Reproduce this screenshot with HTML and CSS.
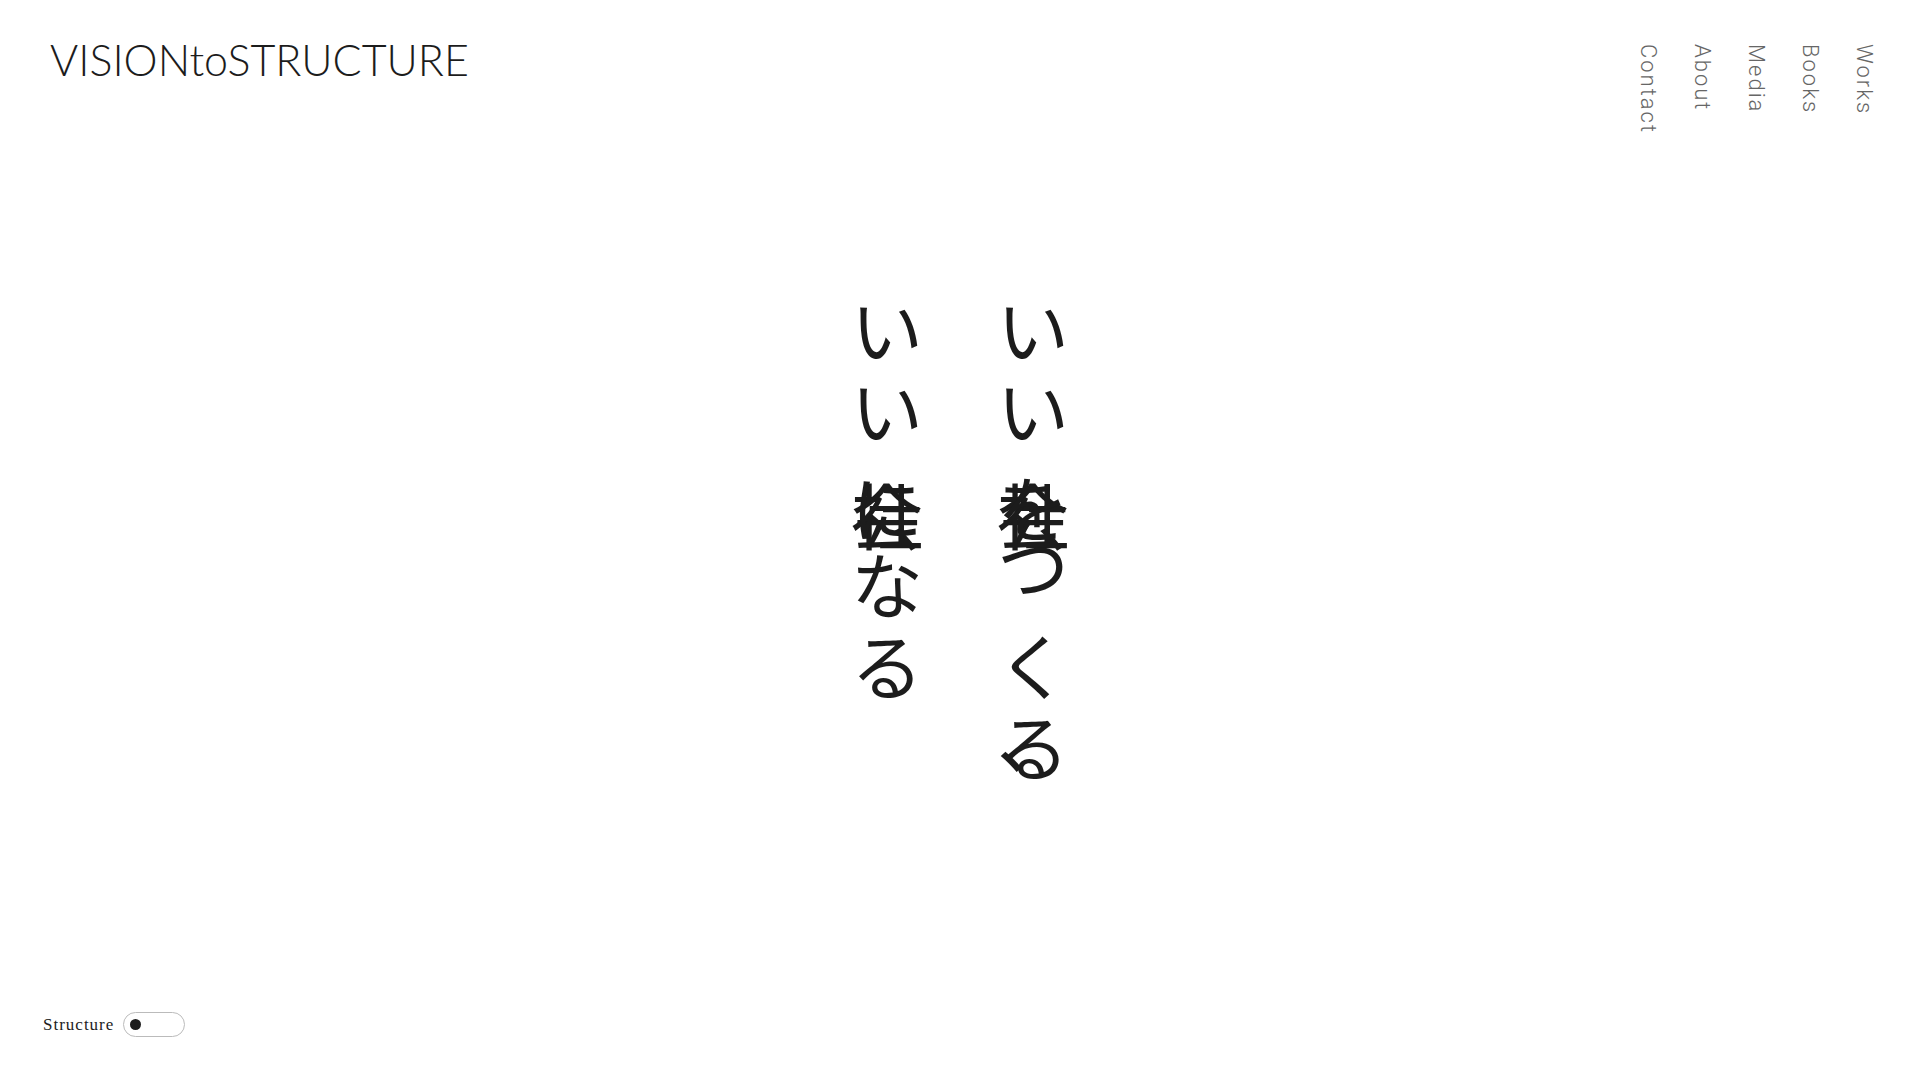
FILE: index.html
```html
<!DOCTYPE html>
<html lang="ja">
<head>
<meta charset="utf-8">
<meta name="viewport" content="width=device-width, initial-scale=1">
<title>VISIONtoSTRUCTURE</title>
<link rel="stylesheet" href="styles.css">
</head>
<body>
<header class="header">
  <a class="logo" href="#">VISIONtoSTRUCTURE</a>
  <nav class="nav">
    <a class="nav-link" href="#">Works</a>
    <a class="nav-link" href="#">Books</a>
    <a class="nav-link" href="#">Media</a>
    <a class="nav-link" href="#">About</a>
    <a class="nav-link" href="#">Contact</a>
  </nav>
</header>
<main class="main">
  <h1 class="copy">
    <span class="line">
      <span class="cell"><span>い</span></span>
      <span class="cell"><span>い</span></span>
      <span class="cell cell-stack"><span>会</span><span>社</span><span class="raised">を</span></span>
      <span class="cell cell-high"><span>つ</span></span>
      <span class="cell cell-low"><span>く</span></span>
      <span class="cell cell-low"><span>る</span><span class="raised">、</span></span>
    </span>
    <span class="line">
      <span class="cell"><span>い</span></span>
      <span class="cell"><span>い</span></span>
      <span class="cell cell-stack"><span>会</span><span>社</span><span class="raised">に</span></span>
      <span class="cell cell-low"><span>な</span></span>
      <span class="cell cell-low"><span>る</span></span>
    </span>
  </h1>
</main>
<footer class="footer">
  <label class="mode-label" for="mode">Structure</label>
  <input class="switch" type="checkbox" role="switch" id="mode">
</footer>
</body>
</html>
```
FILE: styles.css
```css
* {
  box-sizing: border-box;
}

body {
  margin: 0;
  min-height: 100vh;
  display: flex;
  flex-direction: column;
  background: #fff;
  color: #1c1c1c;
}

a {
  color: inherit;
  text-decoration: none;
}

.header {
  display: flex;
  justify-content: space-between;
  align-items: flex-start;
  height: 144px;
  padding: 36px 41px 0 50px;
}

.logo {
  font: 300 43px/48px Lato, sans-serif;
}

.nav {
  display: flex;
  flex-direction: row-reverse;
  gap: 24px;
  padding-top: 8px;
}

.nav-link {
  writing-mode: vertical-rl;
  font: 300 22px/30px Roboto, "Liberation Sans", sans-serif;
  letter-spacing: 2px;
  color: #666;
}

.main {
  flex: 1;
  display: flex;
  justify-content: center;
  padding-top: 140px;
}

.copy {
  display: flex;
  flex-direction: row-reverse;
  gap: 74px;
  margin: 0;
  font: 400 72px/72px "Noto Sans CJK JP", sans-serif;
}

.line {
  display: flex;
  flex-direction: column;
}

/* Glyphs that share a cell are drawn over one another */
.cell {
  display: grid;
  align-content: start;
  width: 72px;
  height: 81px;
  padding-top: 7px;
}

.cell > span {
  grid-area: 1 / 1;
}

.cell-high {
  padding-top: 0;
}

.cell-low {
  padding-top: 19px;
}

.cell-stack {
  padding-top: 31px;
}

.cell > .raised {
  line-height: 56px;
}

.footer {
  display: flex;
  align-items: center;
  gap: 9px;
  padding: 0 43px 43px;
}

.mode-label {
  font: 400 17px/24px "Liberation Serif", serif;
  letter-spacing: 1px;
}

.switch {
  appearance: none;
  display: flex;
  align-items: center;
  width: 62px;
  height: 25px;
  margin: 0;
  padding: 0 6px;
  border: 1px solid #bbb;
  border-radius: 13px;
}

.switch::before {
  content: "";
  width: 11px;
  height: 11px;
  border-radius: 50%;
  background: #1c1c1c;
}

.switch:checked {
  justify-content: flex-end;
}
```
